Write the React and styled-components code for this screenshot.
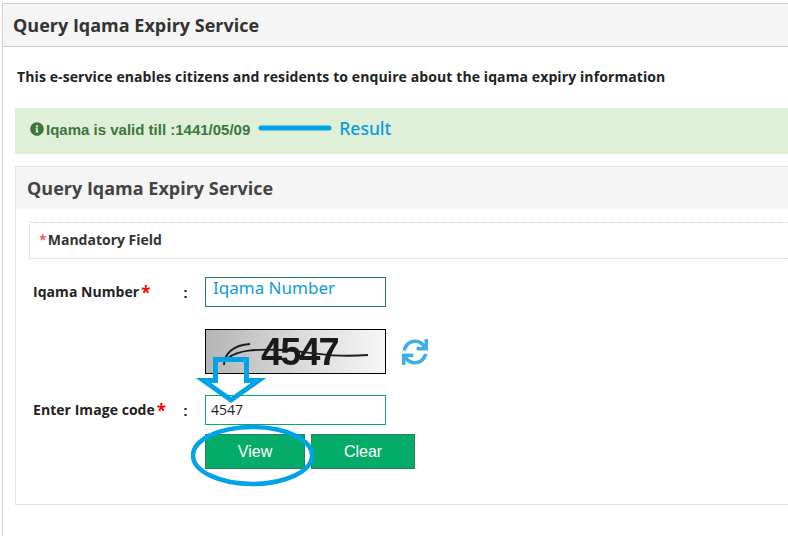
import React from 'react'
import styled, { createGlobalStyle } from 'styled-components'
import { FaInfoCircle, FaSync } from 'react-icons/fa'

const Global = createGlobalStyle`
  html, body { margin: 0; padding: 0; background: #fff; overflow: hidden; }
  body { font-family: "Liberation Sans", Arial, sans-serif; }
`

function Captcha() {
  return (
    <CaptchaBox>
      <CaptchaText>4547</CaptchaText>
      <CaptchaLines viewBox="0 0 179 43">
        <path d="M18 35C18 24 27 15 44 14M22 28C32 20 50 19 75 20C100 21 120 28 162 25" fill="none" stroke="#1c1c1c" strokeWidth="1.800" />
      </CaptchaLines>
    </CaptchaBox>
  )
}

function Annotations() {
  return (
    <Overlay width="788" height="536" viewBox="0 0 788 536">
      <line x1="261" y1="128" x2="329" y2="128" stroke="#00a2e8" strokeWidth="5" strokeLinecap="round" />
      <path d="M215.500 359.500H246.500V380.500H258.500L231 400L203.500 380.500H215.500Z" fill="none" stroke="#00a2e8" strokeWidth="5" />
      <ellipse cx="252.500" cy="455.500" rx="59.500" ry="28.500" fill="none" stroke="#00a2e8" strokeWidth="4.500" />
    </Overlay>
  )
}

export default function App() {
  return (
    <Page>
      <Global />
      <Panel>
        <PanelHeader>Query Iqama Expiry Service</PanelHeader>
        <PanelBody>
          <Intro>This e-service enables citizens and residents to enquire about the iqama expiry information</Intro>
          <Alert>
            <FaInfoCircle size={14} />
            <span>Iqama is valid till :1441/05/09</span>
            <ResultNote>Result</ResultNote>
          </Alert>
          <InnerPanel>
            <InnerHeader>Query Iqama Expiry Service</InnerHeader>
            <InnerBody>
              <Mandatory><SmallStar>*</SmallStar>Mandatory Field</Mandatory>
              <FormRow $top={18}>
                <Label>Iqama Number<Star>*</Star></Label>
                <Colon>:</Colon>
                <FieldBox $border="#217a66" $hint>Iqama Number</FieldBox>
              </FormRow>
              <CaptchaRow>
                <Captcha />
                <RefreshIcon size={26} />
              </CaptchaRow>
              <FormRow $top={21}>
                <Label>Enter Image code<Star>*</Star></Label>
                <Colon>:</Colon>
                <FieldBox $border="#0aa86c">4547</FieldBox>
              </FormRow>
              <Buttons>
                <ActionButton $width={100}>View</ActionButton>
                <ActionButton $width={104}>Clear</ActionButton>
              </Buttons>
            </InnerBody>
          </InnerPanel>
        </PanelBody>
      </Panel>
      <Annotations />
    </Page>
  )
}

const Page = styled.div`
  position: relative;
  width: 788px;
  height: 536px;
  overflow: hidden;
  padding: 3px 0 0 2px;
  box-sizing: border-box;
`
const Panel = styled.div`
  width: 800px;
  height: 560px;
  border: 1px solid #cfcfcf;
  box-sizing: border-box;
`
const PanelHeader = styled.div`
  height: 42px;
  line-height: 42px;
  padding-left: 10px;
  background: #f5f5f5;
  border-bottom: 1px solid #cfcfcf;
  font-family: "Open Sans", sans-serif;
  font-size: 18px;
  font-weight: 700;
  color: #333;
`
const PanelBody = styled.div`
  padding: 0 0 0 12px;
`
const Intro = styled.p`
  margin: 0;
  height: 61px;
  padding: 20px 0 0 2px;
  box-sizing: border-box;
  font-family: "Open Sans", sans-serif;
  font-size: 14px;
  font-weight: 700;
  letter-spacing: 0.1px;
  line-height: 20px;
  color: #222;
`
const Alert = styled.div`
  display: flex;
  align-items: center;
  gap: 2px;
  height: 46px;
  padding: 0 0 4px 15px;
  box-sizing: border-box;
  background: #dff0d8;
  font-size: 15px;
  font-weight: 700;
  color: #3c763d;
`
const ResultNote = styled.span`
  margin: -3px 0 0 87px;
  font-family: "Noto Sans", sans-serif;
  font-size: 17.500px;
  font-weight: 500;
  color: #0a9be0;
`
const InnerPanel = styled.div`
  margin-top: 12px;
  border: 1px solid #e3e3e3;
  height: 339px;
  box-sizing: border-box;
`
const InnerHeader = styled.div`
  height: 42px;
  line-height: 42px;
  padding-left: 11px;
  background: #f5f5f5;
  font-family: "Open Sans", sans-serif;
  font-size: 18px;
  font-weight: 700;
  color: #444;
`
const InnerBody = styled.div`
  padding: 13px 0 0 13px;
`
const Mandatory = styled.div`
  height: 37px;
  line-height: 34px;
  padding-left: 9px;
  border: 1px dotted #d8c8d0;
  box-sizing: border-box;
  font-family: "Open Sans", sans-serif;
  font-size: 14px;
  font-weight: 700;
  color: #333;
`
const SmallStar = styled.span`
  color: #f03030;
  margin-right: 1px;
  font-weight: 400;
`
const FormRow = styled.div`
  display: flex;
  align-items: center;
  margin-top: ${(p) => p.$top}px;
  padding-left: 4px;
`
const Label = styled.label`
  width: 150px;
  line-height: 20px;
  font-family: "Open Sans", sans-serif;
  font-size: 14px;
  font-weight: 700;
  letter-spacing: 0.05px;
  color: #222;
`
const Star = styled.span`
  color: #f00;
  margin-left: 2px;
  font-size: 17px;
  line-height: 0;
  vertical-align: -2px;
`
const Colon = styled.span`
  width: 22px;
  font-size: 15px;
  font-weight: 700;
  color: #222;
`
const FieldBox = styled.div`
  width: 181px;
  height: 30px;
  box-sizing: border-box;
  border: 1px solid ${(p) => p.$border};
  padding-left: ${(p) => (p.$hint ? 7 : 5)}px;
  font-family: ${(p) => (p.$hint ? '"Noto Sans"' : '"Open Sans"')}, sans-serif;
  font-size: ${(p) => (p.$hint ? 17 : 14)}px;
  line-height: ${(p) => (p.$hint ? 20 : 27)}px;
  color: ${(p) => (p.$hint ? '#0a9be0' : '#222')};
`
const CaptchaRow = styled.div`
  display: flex;
  align-items: center;
  gap: 16px;
  margin: 22px 0 0 176px;
`
const CaptchaBox = styled.div`
  position: relative;
  width: 181px;
  height: 45px;
  box-sizing: border-box;
  border: 1px solid #000;
  background: linear-gradient(90deg, #b5b5b5, #dcdcdc 55%, #f6f6f6);
  overflow: hidden;
`
const CaptchaText = styled.span`
  position: absolute;
  left: 55px;
  top: 2px;
  font-family: "Liberation Sans", sans-serif;
  font-weight: 700;
  font-size: 38px;
  line-height: 40px;
  letter-spacing: -2px;
  color: #1a1a1a;
  filter: blur(0.4px);
`
const CaptchaLines = styled.svg`
  position: absolute;
  inset: 0;
`
const RefreshIcon = styled(FaSync)`
  color: #3daee9;
`
const Buttons = styled.div`
  display: flex;
  gap: 6px;
  margin: 9px 0 0 176px;
`
const ActionButton = styled.button`
  width: ${(p) => p.$width}px;
  height: 35px;
  border: 1px solid #27835f;
  background: #05ac69;
  color: #fff;
  font-family: "Liberation Sans", Arial, sans-serif;
  font-size: 16px;
  padding: 0;
`
const Overlay = styled.svg`
  position: absolute;
  left: 0;
  top: 0;
  pointer-events: none;
`
